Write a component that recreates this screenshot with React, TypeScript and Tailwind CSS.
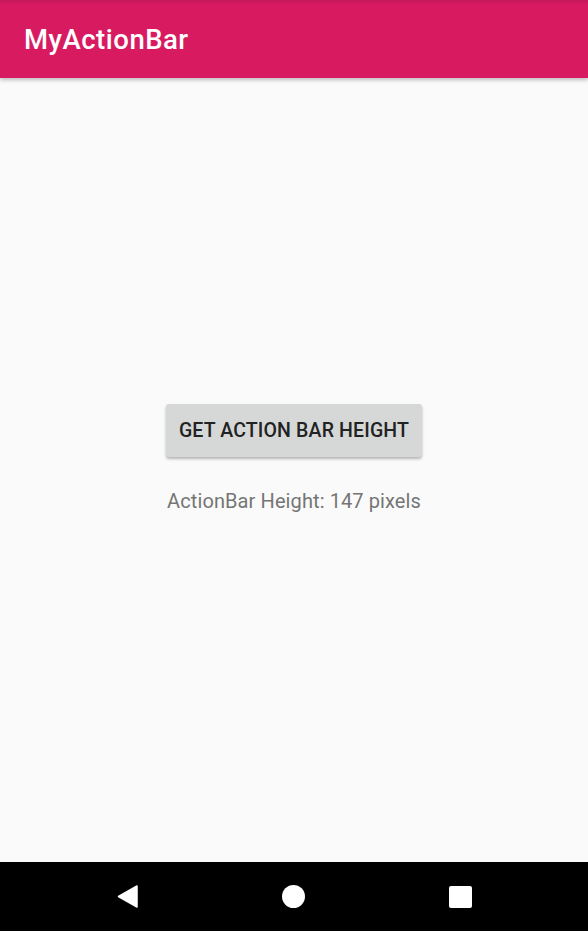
export default function App() {
  return (
    <div
      className="h-[931px] w-full flex flex-col bg-[#fafafa] overflow-hidden"
      style={{ fontFamily: 'Roboto, "Noto Sans", sans-serif' }}
    >
      {/* Action bar */}
      <header className="h-[78px] shrink-0 flex items-center pl-6 shadow-[0_2px_4px_rgba(0,0,0,0.25)] relative z-10 bg-gradient-to-b from-[#c4185a] via-[#d81b60] via-[6%] to-[#d81b60]">
        <h1 className="text-[27.5px] font-medium text-white leading-none tracking-[0.5px] pt-[2px]">MyActionBar</h1>
      </header>

      {/* Content */}
      <main className="flex-1 flex flex-col items-center pt-[326px]">
        <button className="w-[256px] h-[53px] rounded-[3px] bg-[#d6d7d7] shadow-[0_2px_3px_rgba(0,0,0,0.28)] text-[19.5px] font-medium text-[#222222] tracking-[0.15px] flex items-center justify-center">
          GET ACTION BAR HEIGHT
        </button>
        <p className="mt-[34px] text-[20px] text-[#757575] leading-none tracking-[0.1px]">ActionBar Height: 147 pixels</p>
      </main>

      {/* Navigation bar */}
      <nav className="h-[69px] shrink-0 bg-black flex items-center justify-center gap-[144px]">
        <svg width="21" height="23" viewBox="0 0 21 23">
          <path d="M20 1 L20 22 L1.5 11.5 Z" fill="#fff" stroke="#fff" strokeWidth="1.5" strokeLinejoin="round" />
        </svg>
        <div className="w-[23px] h-[23px] rounded-full bg-white" />
        <div className="w-[23px] h-[22px] rounded-[2px] bg-white" />
      </nav>
    </div>
  )
}
